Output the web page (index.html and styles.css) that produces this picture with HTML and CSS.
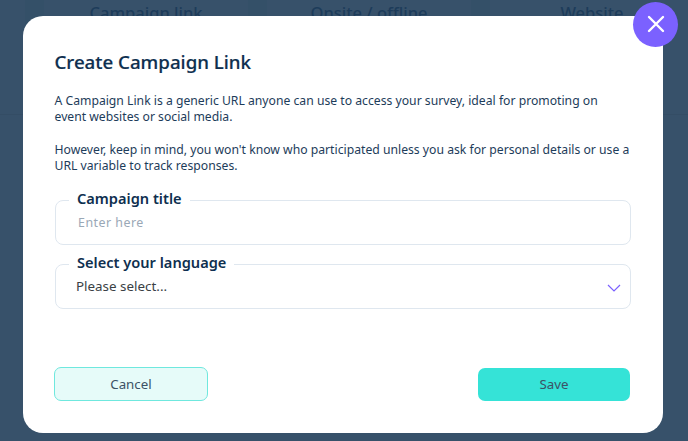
FILE: index.html
```html
<!DOCTYPE html>
<html lang="en">
<head>
<meta charset="utf-8">
<title>Create Campaign Link</title>
<link rel="stylesheet" href="styles.css">
</head>
<body>
<div class="backdrop">
  <div class="bg-card bg-card-edge"></div>
  <div class="bg-card">Campaign link</div>
  <div class="bg-card">Onsite / offline</div>
  <div class="bg-card">Website</div>
</div>
<main class="modal">
  <button class="close" aria-label="Close">
    <svg width="18" height="18" viewBox="0 0 18 18"><path d="M2 2 L16 16 M16 2 L2 16" stroke="#fff" stroke-width="2.4" stroke-linecap="round" fill="none"/></svg>
  </button>
  <h1 class="title">Create Campaign Link</h1>
  <p class="text">A Campaign Link is a generic URL anyone can use to access your survey, ideal for promoting on event websites or social media.</p>
  <p class="text text-second">However, keep in mind, you won't know who participated unless you ask for personal details or use a URL variable to track responses.</p>
  <fieldset class="field">
    <legend class="legend">Campaign title</legend>
    <span class="placeholder">Enter here</span>
  </fieldset>
  <fieldset class="field field-select">
    <legend class="legend">Select your language</legend>
    <span class="value">Please select...</span>
    <svg class="chevron" width="14" height="8" viewBox="0 0 14 8"><path d="M1 1 L7 7 L13 1" stroke="#7b61ff" stroke-width="1.2" fill="none"/></svg>
  </fieldset>
  <div class="actions">
    <button class="btn btn-cancel">Cancel</button>
    <button class="btn btn-save">Save</button>
  </div>
</main>
</body>
</html>
```
FILE: styles.css
```css
* { box-sizing: border-box; }
html, body { margin: 0; height: 100%; }
body {
  width: 688px;
  height: 441px;
  overflow: hidden;
  background: #37516a;
  font-family: "Noto Sans", sans-serif;
  color: #0e2f4f;
  position: relative;
}
.backdrop {
  display: flex;
  gap: 19px;
  width: 710px;
  height: 115px;
  background: #345068;
  border-bottom: 1px solid #344d65;
}
.bg-card {
  flex: 0 0 204px;
  padding-top: 3px;
  background: #37516a;
  font-size: 16.5px;
  font-weight: 500;
  line-height: 20px;
  text-align: center;
  color: #1d3c5a;
}
.bg-card-edge { flex: 0 0 25px; }
.modal {
  position: absolute;
  left: 22.5px;
  top: 16px;
  width: 640.5px;
  height: 417px;
  background: #fff;
  border-radius: 20px;
  padding: 32px;
  display: flex;
  flex-direction: column;
}
.close {
  position: absolute;
  top: -14.5px;
  right: -15px;
  width: 45px;
  height: 45px;
  border: 0;
  border-radius: 50%;
  background: #7b61ff;
  display: flex;
  align-items: center;
  justify-content: center;
  padding: 0;
}
.title {
  margin: 0 0 17px;
  font-size: 18.7px;
  line-height: 28px;
  font-weight: 500;
  -webkit-text-stroke: 0.2px #0e2f4f;
  color: #0e2f4f;
}
.text {
  margin: 0;
  font-size: 12.2px;
  line-height: 16px;
  color: #1d3c5a;
  width: 577px;
}
.text-second { margin-top: 17px; }
.field {
  position: relative;
  margin: 0;
  padding: 0 0 0 22px;
  border: 1px solid #dfe7ef;
  border-radius: 8px;
  height: 57px;
  min-inline-size: 0;
  width: 575.5px;
  margin-left: 0.5px;
}
.field:first-of-type { margin-top: 14.4px; }
.field-select { margin-top: 7px; height: 56.5px; }
.legend {
  margin-left: -9px;
  padding: 0 8px 4px;
  font-size: 14.6px;
  font-weight: 600;
  line-height: 20px;
  color: #0e2f4f;
}
.placeholder {
  display: block;
  margin-top: 2px;
  font-size: 12.4px;
  line-height: 18px;
  letter-spacing: 0.5px;
  color: #9aa8b6;
}
.value {
  display: block;
  margin-top: 1px;
  margin-left: -2px;
  font-size: 13.4px;
  line-height: 18px;
  color: #3a3f45;
}
.chevron { position: absolute; right: 8.5px; top: 7.5px; }
.actions {
  margin-top: auto;
  display: flex;
  justify-content: space-between;
  align-items: flex-start;
  width: 576px;
  margin-left: -0.3px;
}
.btn {
  font-family: inherit;
  font-size: 13.3px;
  color: #3c5265;
  border-radius: 7px;
  padding: 0;
}
.btn-cancel { width: 153.5px; background: #e6fbf9; border: 1px solid #6fe8de; height: 34px; margin-top: -1px; }
.btn-save { width: 152.5px; height: 32.5px; background: #35e3d7; border: 0; }
```
